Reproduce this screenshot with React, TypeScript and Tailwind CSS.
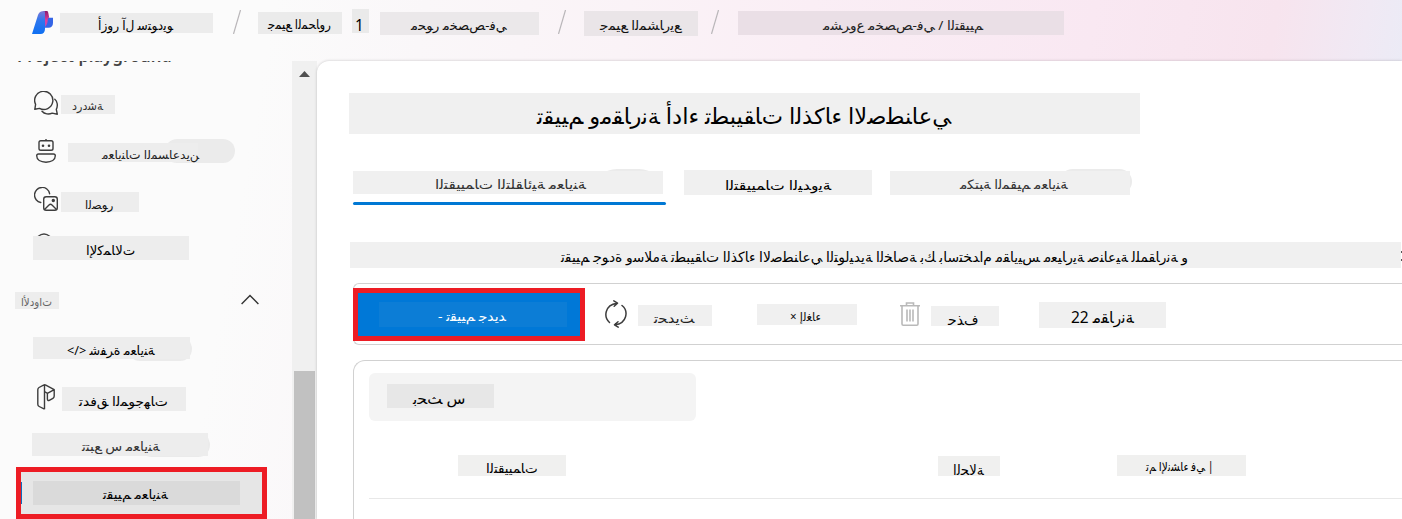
import { useLayoutEffect, useRef } from "react";
import type { ReactNode } from "react";

/* Isolated presentation form of every letter; final, initial and medial forms follow it. */
const DUAL: Record<string, number> = {
  "ئ": 0xfe89, "ب": 0xfe8f, "ت": 0xfe95, "ث": 0xfe99, "ج": 0xfe9d, "ح": 0xfea1, "خ": 0xfea5,
  "س": 0xfeb1, "ش": 0xfeb5, "ص": 0xfeb9, "ط": 0xfec1, "ع": 0xfec9, "غ": 0xfecd, "ف": 0xfed1,
  "ق": 0xfed5, "ك": 0xfed9, "ل": 0xfedd, "م": 0xfee1, "ن": 0xfee5, "ه": 0xfee9, "ي": 0xfef1,
};
const RIGHT: Record<string, number> = {
  "آ": 0xfe81, "أ": 0xfe83, "إ": 0xfe87, "ا": 0xfe8d, "ة": 0xfe93, "د": 0xfea9, "ذ": 0xfeab,
  "ر": 0xfead, "ز": 0xfeaf, "و": 0xfeed,
};
const LAM_ALEF: Record<string, number> = { "آ": 0xfef5, "أ": 0xfef7, "إ": 0xfef9, "ا": 0xfefb };

/* Replaces letters by their contextual forms, kept in logical order. */
function shape(text: string) {
  let out = "";
  for (let i = 0; i < text.length; i++) {
    const c = text[i];
    const next = text[i + 1] ?? "";
    const joinPrev = i > 0 && text[i - 1] in DUAL;
    if (c === "ل" && next in LAM_ALEF) {
      out += String.fromCharCode(LAM_ALEF[next] + (joinPrev ? 1 : 0));
      i++;
    } else if (c in DUAL) {
      const joinNext = next in DUAL || next in RIGHT;
      out += String.fromCharCode(DUAL[c] + (joinPrev ? 1 : 0) + (joinNext ? 2 : 0));
    } else if (c in RIGHT) {
      out += String.fromCharCode(RIGHT[c] + (joinPrev ? 1 : 0));
    } else {
      out += c;
    }
  }
  return out;
}

/* A single line of text stretched or condensed to a given width. */
function T({ w, className = "", children }: { w: number; className?: string; children: string }) {
  const ref = useRef<HTMLSpanElement>(null);
  useLayoutEffect(() => {
    const el = ref.current;
    if (el && el.offsetWidth) el.style.transform = `scaleX(${w / el.offsetWidth})`;
  }, [w]);
  return (
    <span
      ref={ref}
      dir="ltr"
      className={`inline-block shrink-0 origin-left whitespace-nowrap leading-5 [unicode-bidi:bidi-override] ${className}`}
    >
      {shape(children)}
    </span>
  );
}

function Chip({ className, children }: { className: string; children?: ReactNode }) {
  return <div className={`flex shrink-0 items-start ${className}`}>{children}</div>;
}

function Slash({ className }: { className: string }) {
  return (
    <svg className={`mt-[10px] h-6 w-2 shrink-0 ${className}`} viewBox="0 0 8 24" fill="none" stroke="#b9b6b9" strokeWidth="1.2">
      <path d="M7.5 0 .5 24" />
    </svg>
  );
}

function Logo() {
  return (
    <svg className="ml-8 mt-[11px] h-[23px] w-[21px] shrink-0" viewBox="0 0 21 23">
      <defs>
        <linearGradient id="lg1" x1="0" y1="0" x2="0" y2="1">
          <stop offset="0" stopColor="#8078d4" />
          <stop offset=".4" stopColor="#2f77ee" />
          <stop offset="1" stopColor="#0f70f2" />
        </linearGradient>
        <linearGradient id="lg2" x1="0" y1="0" x2="0" y2="1">
          <stop offset="0" stopColor="#8a1a6c" />
          <stop offset=".6" stopColor="#e0409f" />
          <stop offset="1" stopColor="#b04cc0" />
        </linearGradient>
      </defs>
      <path d="M13 6.800h8V12c0 3-1.800 4.800-4.500 4.800H12z" fill="#3565e6" />
      <path d="M12 0h2.800c.8 0 1.200.6 1.400 1.500L17.200 6.500C15.800 7 15.800 8 15.700 9.500 15.500 12.500 14.500 14.500 13 16z" fill="url(#lg2)" />
      <path d="M10.500.3c1.300-.6 2.500-.3 2.500 1.200V18c0 3-1.800 5-4.500 5H0L6 4C6.800 1.700 8.500.3 10.500.3z" fill="url(#lg1)" />
    </svg>
  );
}

function ChatIcon() {
  return (
    <svg className="ml-[34px] mt-[30px] size-6 shrink-0" viewBox="0 0 24 24" fill="none" stroke="#3d3d3d" strokeWidth="1.4" strokeLinejoin="round" strokeLinecap="round">
      <path d="M.8 18.300 1.600 13.400A9.100 9.100 0 1 1 5.500 17.400Z" />
      <path d="M8 20.200c2.500 3 7 3.400 10.200 1.900L23.300 23.200 22.300 18.300C24.200 14.500 23.200 10 20.800 8.200" />
    </svg>
  );
}

function BotIcon() {
  return (
    <svg className="ml-9 mt-6 h-6 w-5 shrink-0" viewBox="0 0 20 24" fill="none" stroke="#3d3d3d" strokeWidth="1.4">
      <path d="M10 0v2" />
      <rect x="3" y="1.8" width="14" height="9.5" rx="1.8" />
      <circle cx="7" cy="6.7" r="1.3" fill="#3d3d3d" stroke="none" />
      <circle cx="13" cy="6.7" r="1.3" fill="#3d3d3d" stroke="none" />
      <path d="M2.500 15h15c1 0 1.800.6 1.800 1.800 0 4-3.800 6.400-9.300 6.400S.7 20.800.7 16.800C.7 15.600 1.500 15 2.500 15Z" />
    </svg>
  );
}

function ImageIcon() {
  return (
    <svg className="ml-[34px] mt-6 size-6 shrink-0" viewBox="0 0 24 24" fill="none" stroke="#3d3d3d" strokeWidth="1.4" strokeLinecap="round">
      <path d="M6.800 15.500A7.600 7.600 0 1 1 15.600 6.700" />
      <rect x="9.7" y="9.7" width="13.6" height="13.6" rx="2.5" />
      <circle cx="19.3" cy="13.500" r="1" fill="#3d3d3d" />
      <path d="m11 22 4-4c1-.9 2-.9 3 0l4 4" />
    </svg>
  );
}

function FlowIcon() {
  return (
    <svg className="ml-[37px] mt-[23px] h-[26px] w-[18px] shrink-0" viewBox="0 0 18 26" fill="none" stroke="#3d3d3d" strokeWidth="1.4" strokeLinejoin="round">
      <path d="M7.500 25.200 2.200 22.500C1.200 22 .8 21.500.8 20.300V5.700C.8 4.700 1.200 4 2 3.500L6.500 1.200C7.300.7 8 .7 8.800 1.100L17.200 5.600V12c0 1.100-.4 1.800-1.300 2.300l-3.600 2c-1.100.6-1.900.1-1.900-1.200V9.300L17.200 5.600M10.400 9.300 7.500 7.500M7.500 1v24.200" />
    </svg>
  );
}

function Sidebar() {
  return (
    <aside className="relative h-[458px] w-[292px] shrink-0 overflow-hidden">
      <div className="ml-[17px] -mt-[18px] h-[18px] w-[240px] text-[17px] font-semibold text-[#444]">
        <T w={155}>Project playground</T>
      </div>
      <div className="flex h-[54px] items-start">
        <ChatIcon />
        <Chip className="ml-[3px] mt-[34px] h-[19px] w-[54px] bg-[#ededed]">
          <T w={31} className="ml-[11px] mt-px text-xs text-[#333]">دردشة</T>
        </Chip>
      </div>
      <div className="flex h-[48px] items-start">
        <BotIcon />
        <div className="relative ml-3 mt-6 h-6 w-[167px]">
          <div className="absolute right-0 top-0 h-6 w-[70px] rounded-full bg-[#ebebeb]" />
          <Chip className="relative mt-1 h-[19px] w-[130px] bg-[#ededed]">
            <T w={97} className="ml-[34px] mt-0.5 text-xs text-[#222]">معاينات المساعدين</T>
          </Chip>
        </div>
      </div>
      <div className="flex h-[48px] items-start">
        <ImageIcon />
        <Chip className="ml-[3px] mt-[29px] h-5 w-[78px] bg-[#ededed]">
          <T w={28} className="ml-6 mt-[3px] text-xs text-[#111]">الصور</T>
        </Chip>
      </div>
      <div className="relative mt-[25px] h-6">
        <svg className="absolute left-[37px] -top-[3px] h-1 w-[14px]" viewBox="0 0 14 4" fill="none" stroke="#444" strokeWidth="1.3">
          <path d="M1 3.500Q7-1.500 13 3.500" />
        </svg>
        <Chip className="relative ml-[33px] h-6 w-[156px] bg-[#ededed]">
          <T w={49} className="ml-[53px] mt-1 text-[13px] text-black">الإكمالات</T>
        </Chip>
      </div>
      <div className="mt-[32px] flex h-[17px] items-start">
        <Chip className="ml-[15px] h-[17px] w-[44px] bg-[#ededed]">
          <T w={31} className="ml-1.5 text-[11px] text-[#666]">الأدوات</T>
        </Chip>
        <svg className="ml-[182px] mt-[2px] h-[11px] w-[18px]" viewBox="0 0 18 11" fill="none" stroke="#333" strokeWidth="1.4">
          <path d="m.6 10 8.400-8.500L17.400 10" />
        </svg>
      </div>
      <div className="relative mt-[28px] h-6">
        <div className="absolute left-[128px] top-0 h-6 w-16 rounded-full bg-[#ebebeb]" />
        <Chip className="relative ml-[33px] mt-px h-[22px] w-[157px] bg-[#ededed]">
          <T w={88} className="ml-[34px] mt-[3px] text-[13px] text-black">{"</> شفرة معاينة"}</T>
        </Chip>
      </div>
      <div className="flex h-[50px] items-start">
        <FlowIcon />
        <Chip className="ml-[7px] mt-[26px] h-6 w-[124px] bg-[#ededed]">
          <T w={89} className="ml-[17px] mt-1 text-[13px] text-black">تدفق الموجهات</T>
        </Chip>
      </div>
      <div className="relative mt-[22px] h-6">
        <div className="absolute left-[140px] top-0 h-6 w-[70px] rounded-full bg-[#ebebeb]" />
        <Chip className="relative ml-8 mt-0.5 h-[23px] w-[176px] bg-[#ededed]">
          <T w={78} className="ml-[50px] mt-[3px] text-[13px] text-[#333]">تتبع س معاينة</T>
        </Chip>
      </div>
      <div className="ml-4 mt-2.5 flex h-[52px] w-[251px] items-start border-[5px] border-[#ed1c24] bg-[#e6e6e6]">
        <div className="mt-2.5 h-[22px] w-px bg-[#0f6cbd]" />
        <Chip className="ml-[11px] mt-[9px] h-6 w-[207px] bg-[#dadada]">
          <T w={65} className="ml-[70px] mt-[3px] text-[13px] text-black">تقييم معاينة</T>
        </Chip>
      </div>
    </aside>
  );
}

function Toolbar() {
  return (
    <div className="ml-9 mt-[15px] flex h-[62px] items-start rounded-l-md border border-r-0 border-[#d1d1d1]">
      <div className="-ml-px mt-1 flex h-[53px] w-[232px] items-start border-[5px] border-[#ed1c24] bg-[#0078d7]">
        <Chip className="ml-[21px] mt-[9px] h-[25px] w-[188px] bg-[#0c7dd6]">
          <T w={68} className="ml-[59px] mt-1 text-[13px] text-white">- تقييم جديد</T>
        </Chip>
      </div>
      <svg className="ml-[19px] mt-4 h-7 w-6 shrink-0" viewBox="0 0 24 28" fill="none" stroke="#3d3d3d" strokeWidth="1.5" strokeLinecap="round" strokeLinejoin="round">
        <path d="M5.500 22.500C-.5 17 .5 5 13 3.200M9.800.8l3.700 2.400-3.300 3M18 5.500C24.800 11 23 23.500 11 24.800M14 21.800l-3.500 3 3.700 2.400" />
      </svg>
      <Chip className="ml-[10px] mt-[21px] h-[21px] w-[74px] bg-[#f0f0f0]">
        <T w={40} className="ml-4 mt-[3px] text-[13px] text-[#222]">تحديث</T>
      </Chip>
      <Chip className="ml-[45px] mt-5 h-[21px] w-[100px] bg-[#f0f0f0]">
        <T w={31} className="ml-[33px] mt-[3px] text-xs text-[#111]">× إلغاء</T>
      </Chip>
      <svg className="ml-[43px] mt-[18px] h-6 w-5 shrink-0" viewBox="0 0 20 24" fill="none" stroke="#b9b9b9" strokeWidth="1.6">
        <path d="M0 3.700h20M6.500 3.500V1h7v2.500M2 4v18c0 .7.500 1.200 1.200 1.200h13.600c.7 0 1.200-.5 1.200-1.200V4M7 7.500v12M10 7.500v12M13 7.500v12" />
      </svg>
      <Chip className="ml-[11px] mt-[22px] h-5 w-[68px] bg-[#f0f0f0]">
        <T w={31} className="ml-[17px] mt-1 text-sm text-black">حذف</T>
      </Chip>
      <Chip className="ml-10 mt-[18px] h-[26px] w-[127px] bg-[#f0f0f0]">
        <T w={63} className="ml-8 mt-[5px] text-[16px] text-black">22 مقارنة</T>
      </Chip>
    </div>
  );
}

function Main() {
  return (
    <main className="h-[458px] w-[1085px] shrink-0 overflow-hidden rounded-tl-xl bg-white shadow-[0_0_3px_rgba(0,0,0,0.22)]">
      <Chip className="ml-8 mt-8 h-[41px] w-[791px] bg-[#f0f0f0]">
        <T w={414} className="ml-[188px] mt-[12px] text-[22px] text-black">تقييم ومقارنة أداء تطبيقات الذكاء الاصطناعي</T>
      </Chip>
      <div className="mt-[35px] flex h-9 items-start">
        <div className="relative ml-9 h-9 w-[313px]">
          <div className="absolute left-[240px] top-0 h-6 w-[70px] rounded-t-full bg-[#ebebeb]" />
          <Chip className="relative mt-0.5 h-[23px] w-[310px] bg-[#f0f0f0]">
            <T w={151} className="ml-[82px] mt-[3px] text-[13px] text-[#333]">التقييمات التلقائية معاينة</T>
          </Chip>
          <div className="mt-2 h-[3px] rounded-full bg-[#0078d4]" />
        </div>
        <Chip className="ml-[18px] mt-px h-[25px] w-[188px] bg-[#f0f0f0]">
          <T w={106} className="ml-[41px] mt-[5px] text-[13px] font-medium text-black">التقييمات اليدوية</T>
        </Chip>
        <div className="relative ml-[18px] h-[26px] w-[242px]">
          <div className="absolute right-0 top-0 h-[25px] w-[72px] rounded-full bg-[#ebebeb]" />
          <Chip className="relative mt-0.5 h-[24px] w-[240px] bg-[#f0f0f0]">
            <T w={108} className="ml-[70px] mt-[3px] text-[13px] text-[#333]">مكتبة المقيم معاينة</T>
          </Chip>
        </div>
      </div>
      <div className="ml-[33px] mt-[37px] flex h-[26px]">
        <Chip className="h-[26px] w-[1051px] bg-[#f0f0f0]">
          <T w={627} className="ml-[211px] mt-[5px] text-sm text-black">
            تقييم جودة وسلامة تطبيقات الذكاء الاصطناعي التوليدية الخاصة بك باستخدام مقاييس معيارية صناعية للمقارنة و
          </T>
        </Chip>
        <div className="mt-[9px] h-2.5 w-px border-y-2 border-[#555]" />
      </div>
      <Toolbar />
      <section className="ml-9 mt-[15px] h-[170px] rounded-tl-xl border border-r-0 border-[#d1d1d1] pl-[15px]">
        <div className="mt-3 flex h-12 w-[327px] items-start rounded-md bg-[#f4f4f4]">
          <Chip className="ml-[18px] mt-[11px] h-[24px] w-[107px] bg-[#e7e7e7]">
            <T w={52} className="ml-[26px] mt-[5px] text-sm text-black">بحث س</T>
          </Chip>
        </div>
        <div className="flex h-[78px] items-start border-b border-[#e8e8e8]">
          <Chip className="ml-[89px] mt-[34px] h-[21px] w-[108px] bg-[#f0f0ef]">
            <T w={52} className="ml-7 mt-[3px] text-[13px] text-black">التقييمات</T>
          </Chip>
          <Chip className="ml-[372px] mt-[35px] h-5 w-[62px] bg-[#f0f0ef]">
            <T w={31} className="ml-[15px] mt-1 text-sm text-black">الحالة</T>
          </Chip>
          <Chip className="ml-[117px] mt-[34px] h-[21px] w-[129px] bg-[#f0f0ef]">
            <T w={68} className="ml-[29px] mt-0.5 text-xs text-black">تم الإنشاء في |</T>
          </Chip>
        </div>
      </section>
    </main>
  );
}

export default function App() {
  return (
    <div className="h-[519px] w-[1402px] overflow-hidden bg-[linear-gradient(100deg,#fbfbfb_0px,#fbfbfb_270px,#faf7f9_420px,#faf3f7_620px,#faeef5_800px,#f9e8f2_1080px,#f7e4ee_1260px,#f0e9f4_1350px,#e6edf8_1440px)] font-['Noto_Sans','DejaVu_Sans',sans-serif]">
      <header className="flex h-[61px] items-start">
        <Logo />
        <Chip className="ml-[7px] mt-[13px] h-5 w-[153px] bg-[#ececec]">
          <T w={75} className="ml-[38px] mt-0.5 text-[13px] text-black">أزور آل ستوديو</T>
        </Chip>
        <Slash className="ml-5" />
        <Chip className="ml-[17px] mt-3 h-[22px] w-[84px] bg-[#ebebeb]">
          <T w={63} className="ml-2.5 mt-0.5 text-[13px] text-black">جميع المحاور</T>
        </Chip>
        <Chip className="ml-[10px] mt-[9px] h-6 w-[17px] bg-[#eaeaea]">
          <T w={9} className="ml-[3px] mt-1.5 text-[17px] text-black">1</T>
        </Chip>
        <Chip className="ml-[11px] mt-3 h-[23px] w-[159px] bg-[#ebe8ea]">
          <T w={96} className="ml-[31px] mt-[3px] text-[13px] text-[#111]">محور مخصص-في</T>
        </Chip>
        <Slash className="ml-[19px]" />
        <Chip className="ml-[18px] mt-[11px] h-[25px] w-[114px] bg-[#eae5e8]">
          <T w={81} className="ml-4 mt-1 text-[13px] text-[#111]">جميع المشاريع</T>
        </Chip>
        <Slash className="ml-[13px]" />
        <Chip className="ml-[19px] mt-[11px] h-6 w-[326px] bg-[#eadfe6]">
          <T w={160} className="ml-[85px] mt-1 text-[13px] text-[#222]">مشروع مخصص-في / التقييم</T>
        </Chip>
      </header>
      <div className="flex h-[458px]">
        <Sidebar />
        <div className="h-[458px] w-[25px] shrink-0 bg-[#f0f0f0]">
          <svg className="ml-[7px] mt-[10px] h-1.5 w-[11px]" viewBox="0 0 11 6" fill="#505050">
            <path d="M5.500 0 11 6H0z" />
          </svg>
          <div className="ml-0.5 mt-[294px] h-[148px] w-[21px] bg-[#c1c1c1]" />
        </div>
        <Main />
      </div>
    </div>
  );
}
